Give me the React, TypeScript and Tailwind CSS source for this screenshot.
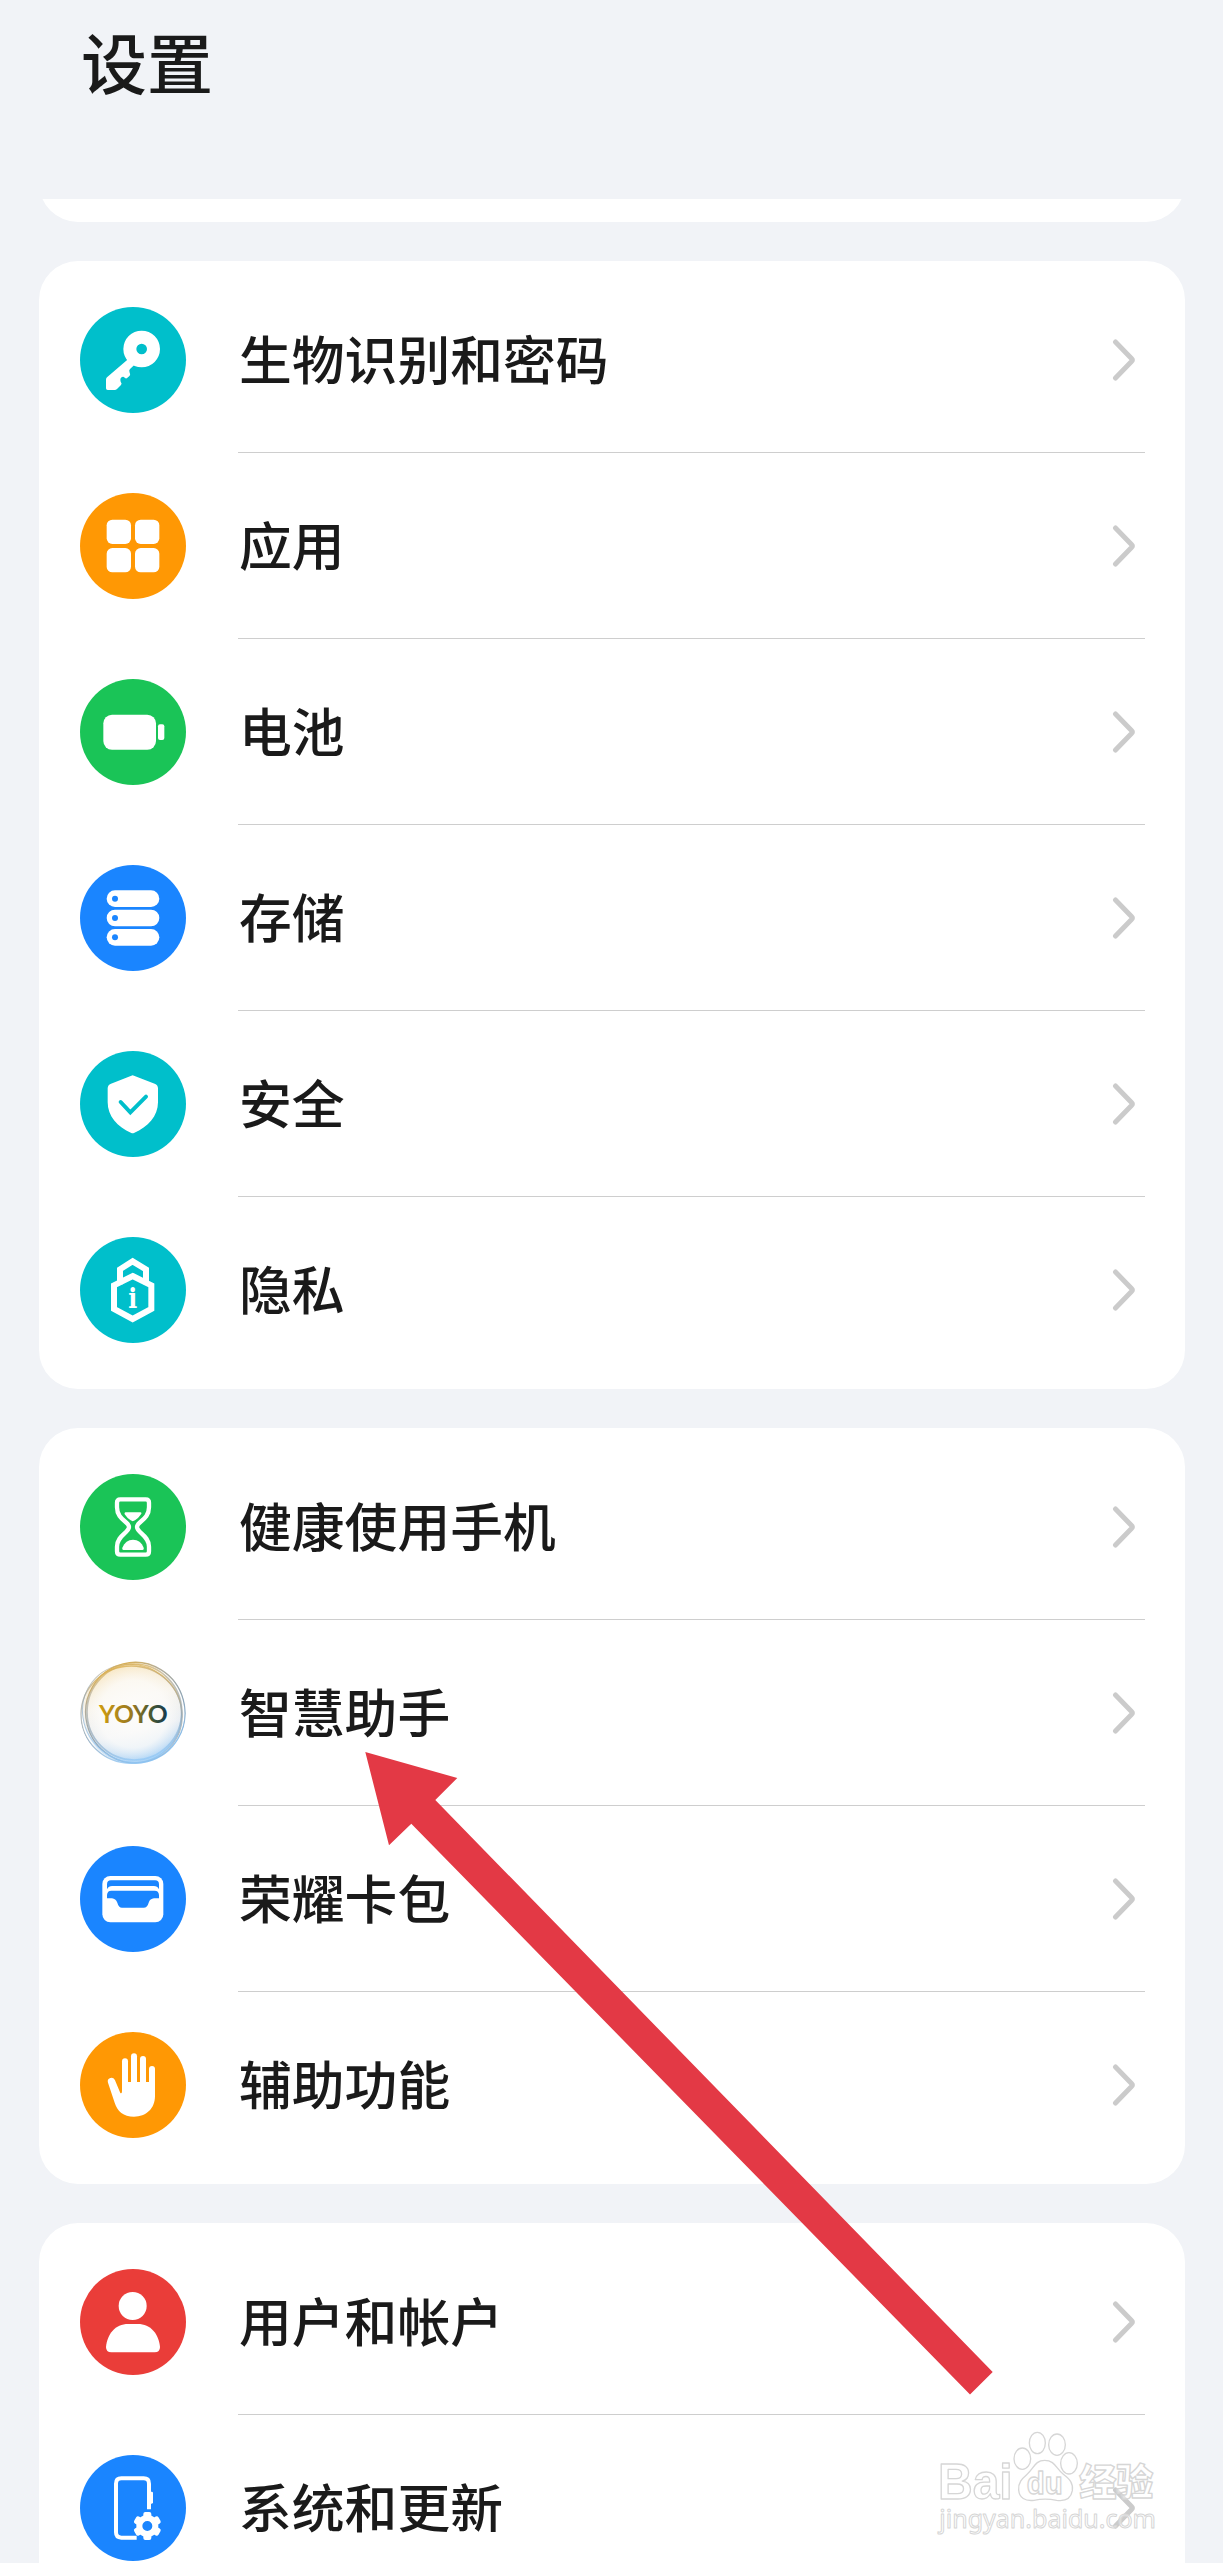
import type { ReactNode } from 'react';

type SettingItem = {
  label: string;
  color: string;
  icon: ReactNode;
};

// All glyphs are drawn on a 318 x 318 grid, the badge circle fills the grid
const KeyIcon = (
  <>
    <path
      fillRule="evenodd"
      d="M185 71a55 55 0 1 1 0 110a55 55 0 1 1 0-110zM185 110a16 16 0 1 0 0 32a16 16 0 1 0 0-32z"
    />
    <path d="M144 157L81 211Q78 214 78 218V244Q78 249 83 249H104Q108 249 111 246L123 234Q127 229 122 224Q119 214 126 210Q131 208 134 212Q139 217 144 211L149 206Q152 202 149 197Q146 190 150 186L162 175Z" />
  </>
);

const AppsIcon = (
  <>
    <rect x="80" y="80" width="73" height="73" rx="17" />
    <rect x="165" y="80" width="73" height="73" rx="17" />
    <rect x="80" y="165" width="73" height="73" rx="17" />
    <rect x="165" y="165" width="73" height="73" rx="17" />
  </>
);

const BatteryIcon = (
  <>
    <rect x="70" y="107" width="158" height="105" rx="26" />
    <rect x="234" y="136" width="19" height="47" rx="6" />
  </>
);

const StorageIcon = (
  <>
    <rect x="80" y="76" width="158" height="50" rx="25" />
    <rect x="80" y="134" width="158" height="50" rx="25" />
    <rect x="80" y="192" width="158" height="50" rx="25" />
    <g fill="#1a85ff">
      <circle cx="105" cy="101" r="9" />
      <circle cx="105" cy="159" r="9" />
      <circle cx="105" cy="217" r="9" />
    </g>
  </>
);

const ShieldIcon = (
  <>
    <path d="M154 74Q158 72 162 74L224 98Q234 102 234 112V154C234 196 204 228 162 246Q158 248 154 246C112 228 83 196 83 154V112Q83 102 93 98Z" />
    <path d="M122 153L151 184L198 137" fill="none" stroke="#00bfcb" strokeWidth="12" strokeLinecap="round" />
  </>
);

const PrivacyIcon = (
  <>
    <g fill="none" stroke="#fff" strokeWidth="18">
      <path d="M158 117L214 145V216L158 246L102 216V145Z" />
      <path d="M120 142V97L158 73L198 97V142" />
    </g>
    <text x="158" y="212" textAnchor="middle" fontSize="82" fontWeight="700" className="font-['DejaVu_Serif',serif]" textLength="27" lengthAdjust="spacingAndGlyphs">
      i
    </text>
  </>
);

const HourglassIcon = (
  <>
    <path
      d="M121 76H197Q207 76 207 86V100C207 138 171 142 171 159C171 176 207 184 207 218V232Q207 242 197 242H121Q111 242 111 232V218C111 184 147 176 147 159C147 142 111 138 111 100V86Q111 76 121 76Z"
      fill="none"
      stroke="#fff"
      strokeWidth="13"
    />
    <path d="M136 115H182Q187 116 183 121Q176 132 165 139Q158 144 152 139Q141 132 134 121Q132 116 136 115Z" />
    <path d="M130 228Q125 227 127 221C134 205 144 197 159 197C174 197 185 205 191 221Q193 227 188 228Z" />
  </>
);

const WalletIcon = (
  <>
    <rect x="67" y="90" width="183" height="139" rx="24" />
    <g fill="#1a85ff">
      <path d="M81 130V115Q81 103 93 103H225Q237 103 237 115V130Q232 120 222 120H96Q86 120 81 130Z" />
      <path d="M81 157V147Q82 134 94 134H224Q236 134 237 147V157H222Q210 158 206 170Q202 185 191 185H126Q116 185 112 170Q107 158 96 157Z" />
    </g>
  </>
);

const HandIcon = (
  <>
    <path d="M84 152A11 11 0 0 1 105 145L121 183Q126 186 126 178V150H225V192C225 230 198 254 162 254C130 254 112 238 104 212Z" />
    <g stroke="#fff" strokeWidth="18" strokeLinecap="round">
      <path d="M135 88V165" />
      <path d="M162 73V165" />
      <path d="M189 81V165" />
      <path d="M216 111V165" />
    </g>
  </>
);

const UserIcon = (
  <>
    <circle cx="158" cy="111" r="42" />
    <path d="M94 250Q78 250 78 234C82 195 105 165 145 165H173C213 165 236 195 240 234Q240 250 224 250Z" />
  </>
);

const SystemIcon = (
  <>
    <path d="M170 248H124Q108 248 108 232V86Q108 70 124 70H191Q207 70 207 86V163" fill="none" stroke="#fff" strokeWidth="12" />
    <rect x="208" y="110" width="11" height="36" rx="4" />
    <g transform="translate(202 213)">
      <circle r="24" fill="none" stroke="#fff" strokeWidth="18" />
      {[0, 60, 120, 180, 240, 300].map((angle) => (
        <rect key={angle} x="-12" y="-42" width="24" height="22" rx="6" transform={`rotate(${angle})`} />
      ))}
    </g>
  </>
);

// Glass bubble with the assistant's name
const YoyoIcon = (
  <>
    <defs>
      <linearGradient id="rim" x1="0.25" y1="0" x2="0.5" y2="1">
        <stop offset="0" stopColor="#e3b043" />
        <stop offset="0.25" stopColor="#b5ad98" />
        <stop offset="0.65" stopColor="#8ea6ba" />
        <stop offset="1" stopColor="#8fc6f5" />
      </linearGradient>
      <linearGradient id="glass" x1="0.25" y1="0" x2="0.5" y2="1">
        <stop offset="0" stopColor="#f8e6c0" />
        <stop offset="0.4" stopColor="#f8f4ec" />
        <stop offset="0.7" stopColor="#e9eef3" />
        <stop offset="1" stopColor="#a9d2f6" />
      </linearGradient>
      <radialGradient id="shine">
        <stop offset="0" stopColor="#fdfcfa" />
        <stop offset="0.7" stopColor="#fdfcfa" stopOpacity="0.75" />
        <stop offset="1" stopColor="#fdfcfa" stopOpacity="0" />
      </radialGradient>
      <linearGradient id="name" x1="58" y1="0" x2="263" y2="0" gradientUnits="userSpaceOnUse">
        <stop offset="0" stopColor="#cf9c10" />
        <stop offset="0.5" stopColor="#967622" />
        <stop offset="0.75" stopColor="#4a5930" />
        <stop offset="1" stopColor="#15394f" />
      </linearGradient>
    </defs>
    <ellipse cx="159" cy="160" rx="151" ry="150" fill="url(#glass)" />
    <circle cx="160" cy="162" r="145" fill="url(#shine)" />
    <g fill="none" stroke="url(#rim)">
      <ellipse cx="154" cy="164" rx="151" ry="146" strokeWidth="4" opacity="0.8" />
      <ellipse cx="166" cy="158" rx="149" ry="151" strokeWidth="4" transform="rotate(-14 166 158)" />
      <ellipse cx="163" cy="156" rx="142" ry="144" strokeWidth="5" opacity="0.7" />
      <ellipse cx="157" cy="160" rx="153" ry="144" strokeWidth="3" opacity="0.7" transform="rotate(38 157 160)" />
    </g>
    <text x="57" y="188" fontSize="72" fontWeight="700" textLength="206" lengthAdjust="spacingAndGlyphs" fill="url(#name)" className="font-[Lato,sans-serif]">
      YOYO
    </text>
  </>
);

const groups: SettingItem[][] = [
  [
    { label: '生物识别和密码', color: 'bg-[#00bfcb]', icon: KeyIcon },
    { label: '应用', color: 'bg-[#ff9804]', icon: AppsIcon },
    { label: '电池', color: 'bg-[#1ac457]', icon: BatteryIcon },
    { label: '存储', color: 'bg-[#1a85ff]', icon: StorageIcon },
    { label: '安全', color: 'bg-[#00bfcb]', icon: ShieldIcon },
    { label: '隐私', color: 'bg-[#00bfcb]', icon: PrivacyIcon },
  ],
  [
    { label: '健康使用手机', color: 'bg-[#1ac457]', icon: HourglassIcon },
    { label: '智慧助手', color: 'bg-white', icon: YoyoIcon },
    { label: '荣耀卡包', color: 'bg-[#1a85ff]', icon: WalletIcon },
    { label: '辅助功能', color: 'bg-[#ff9804]', icon: HandIcon },
  ],
  [
    { label: '用户和帐户', color: 'bg-[#ea3d39]', icon: UserIcon },
    { label: '系统和更新', color: 'bg-[#1a85ff]', icon: SystemIcon },
  ],
];

function Chevron() {
  return (
    <svg className="mr-2.5 h-[42px] w-6" viewBox="0 0 24 42" fill="none" stroke="#cbcbcb" strokeWidth="5" strokeLinecap="round" strokeLinejoin="round">
      <path d="M4.5 3L20.5 19.5Q22 21 20.5 22.5L4.5 39" />
    </svg>
  );
}

function SettingRow({ item, last }: { item: SettingItem; last: boolean }) {
  return (
    <li className="flex h-[186px] items-center gap-[52px] pr-10 pl-[41px]">
      <div className={`size-[106px] shrink-0 overflow-hidden rounded-full ${item.color}`}>
        <svg className="size-full" viewBox="0 0 318 318" fill="#fff">
          {item.icon}
        </svg>
      </div>
      <div className={`flex h-full flex-1 items-center justify-between border-b ${last ? 'border-transparent' : 'border-[#cecece]'}`}>
        <span className="pb-[5px] pl-px text-[52.8px] leading-none font-medium">{item.label}</span>
        <Chevron />
      </div>
    </li>
  );
}

function Arrow() {
  return (
    <svg className="absolute top-[1740px] left-[350px] h-[670px] w-[660px]" viewBox="350 1740 660 670">
      <path fill="#e33945" d="M365.3 1752L457.3 1778L435.3 1800L992.7 2372L970 2394.5L411.3 1823.7L389 1845.3Z" />
    </svg>
  );
}

function Watermark() {
  return (
    <svg
      className="absolute top-[2340px] left-[900px] h-[223px] w-[323px]"
      viewBox="0 0 969 669"
      fill="#fff"
      fillOpacity="0.45"
      stroke="#d6d6d6"
      strokeWidth="4"
      strokeLinejoin="round"
    >
      <ellipse cx="367" cy="356" rx="25" ry="32" />
      <ellipse cx="412" cy="309" rx="24" ry="32" />
      <ellipse cx="471" cy="314" rx="25" ry="32" />
      <ellipse cx="507" cy="370" rx="25" ry="32" />
      <path d="M434 361C465 361 468 386 490 403C510 418 520 430 517 452C512 480 492 484 470 481Q435 474 402 481C375 484 358 474 356 450C354 428 366 416 380 404C402 386 404 361 434 361Z" />
      <text x="114" y="478" fontSize="148" fontWeight="700" textLength="224" lengthAdjust="spacingAndGlyphs" className="font-['Liberation_Sans',sans-serif]">
        Bai
      </text>
      <text x="380" y="462" fontSize="92" fontWeight="700" textLength="108" lengthAdjust="spacingAndGlyphs" className="font-['Liberation_Sans',sans-serif]">
        du
      </text>
      <text x="538" y="468" fontSize="112" fontWeight="900" textLength="222" className="font-['Noto_Sans_CJK_SC',sans-serif]">
        经验
      </text>
      <text x="118" y="565" fontSize="76" textLength="650" lengthAdjust="spacingAndGlyphs" strokeWidth="3" className="font-['Noto_Sans',sans-serif]">
        jingyan.baidu.com
      </text>
    </svg>
  );
}

export default function App() {
  return (
    <div className="relative h-[2563px] w-[1223px] overflow-hidden bg-[#f1f3f7] font-['Noto_Sans_CJK_SC',sans-serif] text-[#1a1a1a]">
      <header className="h-[199px] px-[81px] pt-[27px]">
        <h1 className="text-[66px] leading-none font-medium">设置</h1>
      </header>

      <main className="flex flex-col gap-[39px] px-[39px] pr-[38px]">
        {/* end of the group scrolled under the header */}
        <div className="flex h-[23px] flex-col justify-end overflow-hidden">
          <div className="h-24 shrink-0 rounded-[39px] bg-white" />
        </div>

        {groups.map((items, index) => (
          <ul key={index} className="rounded-[39px] bg-white py-1.5">
            {items.map((item, i) => (
              <SettingRow key={item.label} item={item} last={i === items.length - 1} />
            ))}
          </ul>
        ))}
      </main>

      <Arrow />
      <Watermark />
    </div>
  );
}
